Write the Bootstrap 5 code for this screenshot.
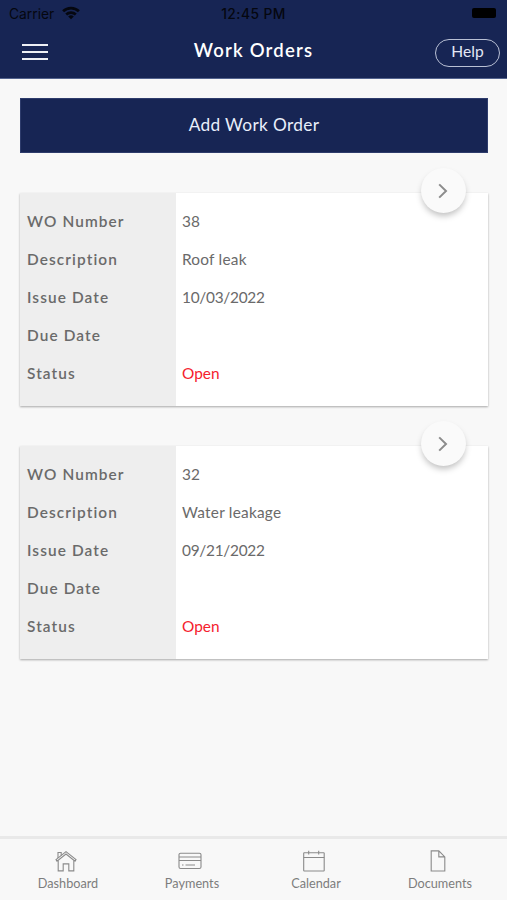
<!DOCTYPE html>
<html lang="en">
<head>
<meta charset="utf-8">
<meta name="viewport" content="width=device-width, initial-scale=1">
<title>Work Orders</title>
<link href="https://cdn.jsdelivr.net/npm/bootstrap@5.3.0/dist/css/bootstrap.min.css" rel="stylesheet">
<style>
  :root { --navy: #172554; --ink: #6a6a6a; }
  body { font-family: Lato, "Liberation Sans", sans-serif; background: #f8f8f8; color: var(--ink); font-size: 15.4px; }
  .app { height: 900px; overflow: hidden; }
  .app-header { height: 79px; background: var(--navy); border-bottom: 1px solid #53638e; }
  .status-bar { height: 27px; color: #05070f; font-family: Inter, sans-serif; font-size: 13.8px; line-height: 27px; padding: 1px 9px 0; }
  .status-bar .clock { font-weight: 500; letter-spacing: .45px; }
  .status-bar svg { margin-top: -2px; }
  .battery { width: 24px; height: 10px; background: #000; border-radius: 2px; margin: -2px 2px 0 0; }
  .title-bar { height: 49px; padding: 0 7px; }
  .menu-lines { width: 26px; height: 16px; margin-left: 15px; }
  .menu-lines span { height: 2px; background: #eef0f6; }
  .page-title { font-size: 18.5px; font-weight: 600; letter-spacing: 1.2px; color: #fff; line-height: 46px; padding-bottom: 3px; }
  .btn-help { width: 65px; height: 28px; border: 1.6px solid #b9c0d4; color: #e4e8f4; font-size: 15.6px; line-height: 20px; margin-top: 2px; padding: 0 0 4px; }
  .btn-add { height: 55px; background: var(--navy); color: #e9effb; border: 1px solid #2e3c6c; font-size: 17.3px; letter-spacing: .33px; padding-bottom: 8px; }
  .app-main { padding: 19px 19px 0 20px; }
  .order { height: 213px; border: 0; border-radius: 0; margin-top: 40px; box-shadow: 0 1px 2px rgba(0,0,0,.32); }
  .order-labels { width: 156px; background: #eee; padding: 9px 0 0 7px; font-weight: 600; letter-spacing: 1.1px; }
  .order-values { padding: 9px 0 0 6px; background: #fff; }
  .order dt, .order dd { height: 38px; line-height: 38px; margin: 0; font-weight: inherit; }
  .order .wo-date { letter-spacing: -.27px; }
  .order .wo-text { letter-spacing: .23px; }
  .status-open { color: #f5212d; }
  .go { width: 45px; height: 45px; right: 22px; top: -25px; background: #fafafa; border: 0; padding: 0 1px 0 0; box-shadow: 0 4px 6px -1px rgba(0,0,0,.25); }
  .tabs { height: 64px; border-top: 3px solid #e9e9e9; padding: 11px 5px 0 6px; font-size: 12.7px; color: #7d7d7d; line-height: 18px; }
  .tabs svg { margin: 0 4px 2px 0; }
  .tabs a { color: inherit; }
</style>
</head>
<body>
<div class="app d-flex flex-column">
  <header class="app-header flex-shrink-0">
    <div class="status-bar d-flex align-items-center">
      <div class="col d-flex align-items-center gap-2">
        <span>Carrier</span>
        <svg width="18" height="14" viewBox="0 0 18 14" fill="none" stroke="#05070f" stroke-width="2.7"><path d="M1.1 5.3a11.3 11.3 0 0 1 15.8 0M4.2 8.6a7 7 0 0 1 9.6 0"/><path d="M9 13.3 6.2 10.5a4 4 0 0 1 5.6 0z" fill="#05070f" stroke="none"/></svg>
      </div>
      <div class="clock">12:45 PM</div>
      <div class="col d-flex justify-content-end"><div class="battery"></div></div>
    </div>
    <div class="title-bar d-flex align-items-center">
      <div class="col">
        <div class="menu-lines d-flex flex-column justify-content-between"><span></span><span></span><span></span></div>
      </div>
      <h1 class="page-title m-0">Work Orders</h1>
      <div class="col d-flex justify-content-end"><button class="btn btn-help rounded-pill">Help</button></div>
    </div>
  </header>

  <main class="app-main flex-grow-1">
    <button class="btn btn-add w-100 rounded-0">Add Work Order</button>

    <section class="card order flex-row position-relative">
      <dl class="order-labels m-0"><dt>WO Number</dt><dt>Description</dt><dt>Issue Date</dt><dt>Due Date</dt><dt>Status</dt></dl>
      <dl class="order-values flex-grow-1 m-0"><dd>38</dd><dd class="wo-text">Roof leak</dd><dd class="wo-date">10/03/2022</dd><dd></dd><dd class="status-open">Open</dd></dl>
      <button class="go btn rounded-circle position-absolute d-flex align-items-center justify-content-center" aria-label="Open order 38">
        <svg width="10" height="16" viewBox="0 0 10 16" fill="none" stroke="#8c8c8c" stroke-width="2"><path d="M1.2 1.4 8 8l-6.8 6.6"/></svg>
      </button>
    </section>

    <section class="card order flex-row position-relative">
      <dl class="order-labels m-0"><dt>WO Number</dt><dt>Description</dt><dt>Issue Date</dt><dt>Due Date</dt><dt>Status</dt></dl>
      <dl class="order-values flex-grow-1 m-0"><dd>32</dd><dd class="wo-text">Water leakage</dd><dd class="wo-date">09/21/2022</dd><dd></dd><dd class="status-open">Open</dd></dl>
      <button class="go btn rounded-circle position-absolute d-flex align-items-center justify-content-center" aria-label="Open order 32">
        <svg width="10" height="16" viewBox="0 0 10 16" fill="none" stroke="#8c8c8c" stroke-width="2"><path d="M1.2 1.4 8 8l-6.8 6.6"/></svg>
      </button>
    </section>
  </main>

  <nav class="tabs d-flex flex-shrink-0">
    <a class="col d-flex flex-column align-items-center text-decoration-none" href="#">
      <svg width="22" height="22" viewBox="0 0 22 22" fill="none" stroke="#8a8a8a" stroke-width="1.1"><path d="M3.2 10.5v10.4h5v-7h5.600v7h5V10.500"/><path d="m1 9.600 10-8 10 8-1 1.500L11 4 2 11.100z"/><path d="M3 8V2.500h3.200v3"/></svg>
      <span>Dashboard</span>
    </a>
    <a class="col d-flex flex-column align-items-center text-decoration-none" href="#">
      <svg width="24" height="22" viewBox="0 0 24 22" fill="none" stroke="#8a8a8a" stroke-width="1.1"><rect x="1" y="3.200" width="22" height="15.300" rx="1.600"/><path d="M1 7h22M1 10.500h22M4 15h1.500M7.500 15h9.500"/></svg>
      <span>Payments</span>
    </a>
    <a class="col d-flex flex-column align-items-center text-decoration-none" href="#">
      <svg width="22" height="22" viewBox="0 0 22 22" fill="none" stroke="#8a8a8a" stroke-width="1.1"><rect x=".7" y="2.700" width="20.500" height="18.300" rx=".6"/><path d="M.7 7.500h20.500M5.700.8v3.600M15.700.8v3.600"/></svg>
      <span>Calendar</span>
    </a>
    <a class="col d-flex flex-column align-items-center text-decoration-none" href="#">
      <svg width="16" height="22" viewBox="0 0 16 22" fill="none" stroke="#8a8a8a" stroke-width="1.1"><path d="M1.200.9h7.600l6 6V21H1.200zM8.800.9v6h6"/></svg>
      <span>Documents</span>
    </a>
  </nav>
</div>
<script src="https://cdn.jsdelivr.net/npm/bootstrap@5.3.0/dist/js/bootstrap.bundle.min.js"></script>
</body>
</html>
